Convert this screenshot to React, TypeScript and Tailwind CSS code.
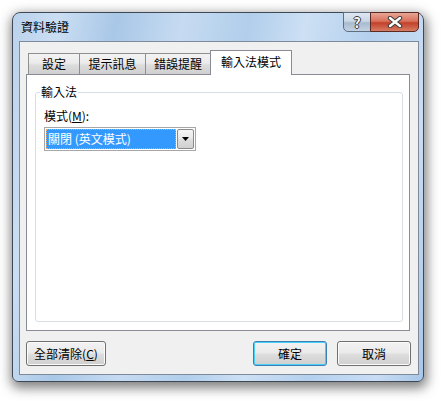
import React from "react";

const FONT =
  "font-['Segoe_UI','Noto_Sans_CJK_TC','Noto_Sans_CJK_SC',sans-serif]";

function Tab({
  label,
  width,
  active,
  first,
}: {
  label: string;
  width: string;
  active?: boolean;
  first?: boolean;
}) {
  if (active) {
    return (
      <div
        className={`${width} relative z-10 -mb-px -ml-px flex h-[25px] items-start justify-center border border-b-0 border-[#898c95] bg-white pt-[3px] text-[12px] leading-[16px] text-black`}
      >
        {label}
      </div>
    );
  }
  return (
    <div
      className={`${width} ${first ? "" : "-ml-px"} flex h-[21px] items-center justify-center border border-b-0 border-[#8e8f8f] bg-[linear-gradient(#f3f3f3,#ebebeb_45%,#dddddd_55%,#cfcfcf)] text-[12px] leading-[16px] text-black`}
    >
      {label}
    </div>
  );
}

function Button({
  children,
  width,
  primary,
}: {
  children: React.ReactNode;
  width: string;
  primary?: boolean;
}) {
  return (
    <div
      className={`${width} flex h-[25px] items-center justify-center rounded-[3px] border ${
        primary
          ? "border-[#3c7fb1] shadow-[inset_0_0_0_1px_#48d0fb]"
          : "border-[#707070] shadow-[inset_0_0_0_1px_#fbfbfb]"
      } bg-[linear-gradient(#f2f2f2,#ebebeb_45%,#dddddd_55%,#cfcfcf)] text-[12px] leading-[16px] text-black`}
    >
      {children}
    </div>
  );
}

export default function App() {
  return (
    <div className={`h-[403px] w-[446px] bg-white pl-[12px] pt-[12px] ${FONT}`}>
      <div className="flex h-[370px] w-[412px] flex-col rounded-b-[6px] rounded-t-[8px] border border-[#3f4955] bg-[linear-gradient(100deg,#bad2ec_0%,#cadef3_10%,#a9c7e7_22%,#c6dbf1_36%,#b1ceeb_50%,#cde0f4_62%,#b4d0ee_76%,#c9ddf4_90%,#a7c6e8_100%)] shadow-[1px_4px_12px_2px_rgba(0,0,0,0.5)]">
        {/* title bar */}
        <div className="flex h-[28px] items-start justify-between pl-[8px] pr-[4px]">
          <span className="mt-[6px] text-[12px] leading-[16px] text-black">
            資料驗證
          </span>
          <div className="-mt-px flex h-[20px]">
            <div className="flex w-[28px] items-center justify-center rounded-bl-[5px] border border-[#5f6f82] bg-[linear-gradient(#dfe8f2,#c9d6e5_45%,#a8bbcf_55%,#c3d2e2)] text-[14px] font-bold leading-none text-[#f6f6f6] [text-shadow:1px_0_#3a3a3a,-1px_0_#3a3a3a,0_1px_#3a3a3a,0_-1px_#3a3a3a]">
              ?
            </div>
            <div className="-ml-px flex w-[49px] items-center justify-center rounded-br-[5px] border border-[#5b2a22] bg-[linear-gradient(#e8a596,#d9725c_45%,#c2412b_55%,#d67d63)]">
              <svg width="16" height="12" viewBox="0 0 16 12">
                <path
                  d="M3 2 L13 10 M13 2 L3 10"
                  stroke="#3b3b3b"
                  strokeWidth="4.4"
                  strokeLinecap="round"
                />
                <path
                  d="M3 2 L13 10 M13 2 L3 10"
                  stroke="#ffffff"
                  strokeWidth="2.4"
                  strokeLinecap="round"
                />
              </svg>
            </div>
          </div>
        </div>

        {/* client area */}
        <div className="ml-[6px] flex h-[334px] w-[400px] flex-col border border-[#7e8a99] bg-[#f0f0f0] px-[6px] pt-[8px]">
          <div className="flex h-[24px] items-end pl-[2px]">
            <Tab label="設定" width="w-[52px]" first />
            <Tab label="提示訊息" width="w-[67px]" />
            <Tab label="錯誤提醒" width="w-[66px]" />
            <Tab label="輸入法模式" width="w-[82px]" active />
          </div>

          <div className="h-[257px] w-[384px] border border-[#898c95] bg-white pl-[8px] pt-[17px]">
            <div className="relative h-[230px] w-[368px] rounded-[3px] border border-[#d5dfe5] pl-[8px] pt-[15px]">
              <span className="absolute -top-[9px] left-[4px] bg-white px-[1px] text-[12px] leading-[16px] text-black">
                輸入法
              </span>
              <div className="text-[12px] leading-[16px] text-black">
                模式(<u>M</u>):
              </div>
              <div className="mt-[3px] flex h-[24px] w-[152px] items-center border border-[#a7a7a7] bg-white p-px">
                <div className="flex h-[20px] flex-1 items-center bg-[#3399ff] pl-[2px] text-[12px] leading-[16px] text-white outline-1 outline-dotted outline-[#f3a35a] -outline-offset-1">
                  關閉 (英文模式)
                </div>
                <div className="ml-px flex h-[20px] w-[17px] items-center justify-center rounded-[2px] border border-[#8a8a8a] bg-[linear-gradient(#f4f4f4,#e9e9e9_45%,#dcdcdc_55%,#d0d0d0)]">
                  <svg width="7" height="4" viewBox="0 0 7 4">
                    <path d="M0 0 H7 L3.5 4 Z" fill="#000" />
                  </svg>
                </div>
              </div>
            </div>
          </div>

          <div className="mt-[10px] flex w-[386px] items-center justify-between pr-[1px]">
            <Button width="w-[80px]">
              全部清除(<u>C</u>)
            </Button>
            <div className="flex gap-[10px]">
              <Button width="w-[74px]" primary>
                確定
              </Button>
              <Button width="w-[74px]">取消</Button>
            </div>
          </div>
        </div>
      </div>
    </div>
  );
}
